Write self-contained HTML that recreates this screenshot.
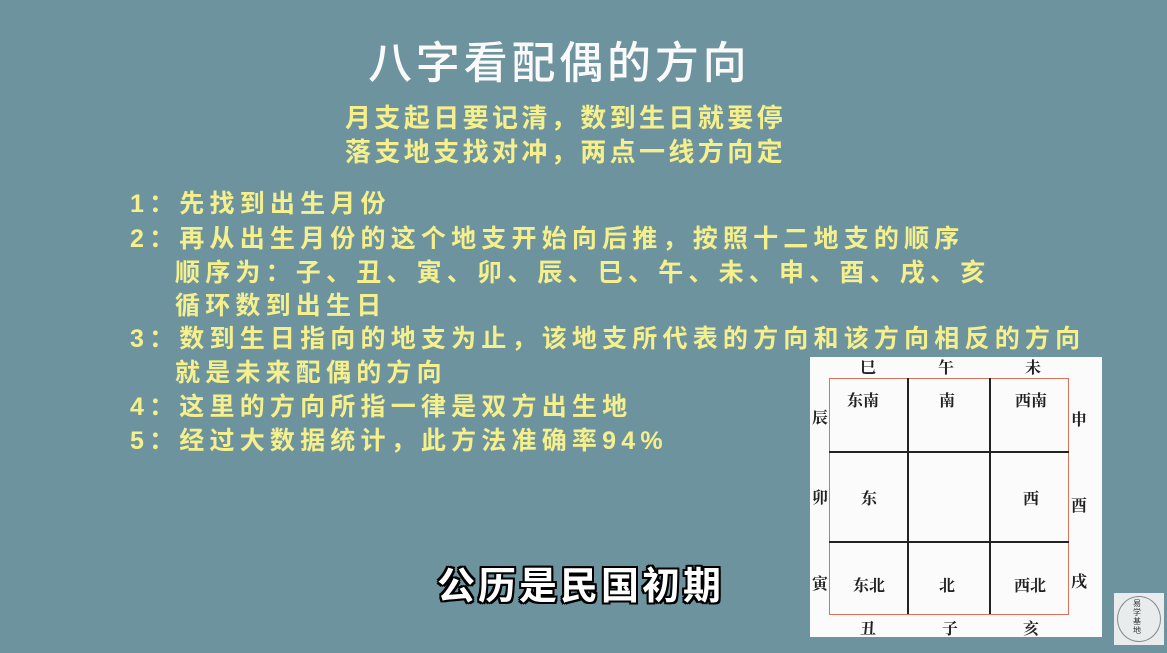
<!DOCTYPE html>
<html><head><meta charset="utf-8"><style>
body{margin:0;width:1167px;height:653px;background:#6d949e;position:relative;overflow:hidden;font-family:"Liberation Sans","Noto Sans CJK SC",sans-serif;}
.t{position:absolute;white-space:nowrap;}
.title{left:368px;top:27px;font-size:44px;color:#fafafa;letter-spacing:3.8px;font-weight:500;}
.y{color:#f6f08c;font-weight:bold;}
.sub{font-size:26px;letter-spacing:3.4px;}
.li{font-size:25px;letter-spacing:5.2px;left:130px;}
.box{position:absolute;left:810px;top:357px;width:292px;height:280px;background:#fbfbfb;}
.grid{position:absolute;left:19px;top:21px;width:238px;height:235px;border:1.5px solid #d9735c;}
.l{position:absolute;background:#222;}
.c{position:absolute;font-size:16px;font-weight:bold;color:#222;font-family:"Noto Serif CJK SC",serif;}
.cap{left:437px;top:555px;font-size:38px;font-weight:bold;color:#fff;letter-spacing:3px;text-shadow:-2px -2px 0 #000,2px -2px 0 #000,-2px 2px 0 #000,2px 2px 0 #000,0 2px 0 #000,0 -2px 0 #000,2px 0 0 #000,-2px 0 0 #000;}
</style></head><body>
<div class="t title">八字看配偶的方向</div>
<div class="t y sub" style="left:345px;top:98px">月支起日要记清，数到生日就要停</div>
<div class="t y sub" style="left:345px;top:132px">落支地支找对冲，两点一线方向定</div>
<div class="t y li" style="top:184px">1：先找到出生月份</div>
<div class="t y li" style="top:219px">2：再从出生月份的这个地支开始向后推，按照十二地支的顺序</div>
<div class="t y li" style="top:253px;left:175px">顺序为：子、丑、寅、卯、辰、巳、午、未、申、酉、戌、亥</div>
<div class="t y li" style="top:286px;left:175px">循环数到出生日</div>
<div class="t y li" style="top:319px">3：数到生日指向的地支为止，该地支所代表的方向和该方向相反的方向</div>
<div class="t y li" style="top:353px;left:175px">就是未来配偶的方向</div>
<div class="t y li" style="top:387px">4：这里的方向所指一律是双方出生地</div>
<div class="t y li" style="top:421px">5：经过大数据统计，此方法准确率94%</div>
<div class="box">
<div class="grid"></div>
<div class="l" style="left:97px;top:21px;width:2px;height:236px"></div>
<div class="l" style="left:179px;top:21px;width:2px;height:236px"></div>
<div class="l" style="left:19px;top:94px;width:240px;height:2px"></div>
<div class="l" style="left:19px;top:184px;width:240px;height:2px"></div>
<div class="c" style="left:50px;top:-2px">巳</div>
<div class="c" style="left:128px;top:-2px">午</div>
<div class="c" style="left:215px;top:-2px">未</div>
<div class="c" style="left:2px;top:48px">辰</div>
<div class="c" style="left:2px;top:128px">卯</div>
<div class="c" style="left:2px;top:214px">寅</div>
<div class="c" style="left:261px;top:50px">申</div>
<div class="c" style="left:261px;top:136px">酉</div>
<div class="c" style="left:261px;top:212px">戌</div>
<div class="c" style="left:50px;top:259px">丑</div>
<div class="c" style="left:132px;top:259px">子</div>
<div class="c" style="left:213px;top:259px">亥</div>
<div class="c" style="left:37px;top:31px">东南</div>
<div class="c" style="left:129px;top:31px">南</div>
<div class="c" style="left:205px;top:31px">西南</div>
<div class="c" style="left:51px;top:129px">东</div>
<div class="c" style="left:213px;top:129px">西</div>
<div class="c" style="left:43px;top:216px">东北</div>
<div class="c" style="left:129px;top:216px">北</div>
<div class="c" style="left:204px;top:216px">西北</div>
</div>
<div class="t cap">公历是民国初期</div>
<div style="position:absolute;left:1114px;top:593px;width:50px;height:52px;background:#e8ecec;">
<div style="position:absolute;left:3px;top:3px;width:42px;height:44px;border:1px solid #888;border-radius:50%;"></div>
<div class="t" style="left:19px;top:6px;font-size:8px;line-height:9px;width:9px;white-space:normal;color:#333">易学基地</div>
</div>
</body></html>
